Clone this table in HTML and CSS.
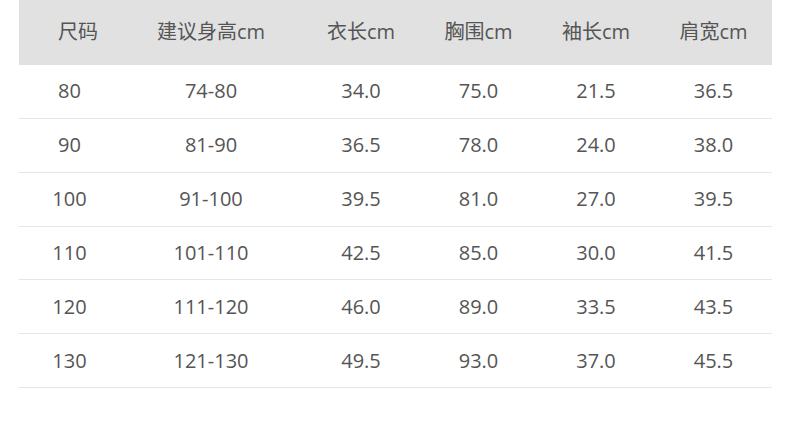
FILE: index.html
```html
<!DOCTYPE html>
<html lang="zh">
<head>
<meta charset="utf-8">
<link rel="stylesheet" href="styles.css">
</head>
<body>
<div class="size-table">
  <div class="row head">
    <div class="cell first">尺码</div><div class="cell">建议身高cm</div><div class="cell">衣长cm</div><div class="cell">胸围cm</div><div class="cell">袖长cm</div><div class="cell">肩宽cm</div>
  </div>
  <div class="row"><div class="cell">80</div><div class="cell">74-80</div><div class="cell">34.0</div><div class="cell">75.0</div><div class="cell">21.5</div><div class="cell">36.5</div></div>
  <div class="row"><div class="cell">90</div><div class="cell">81-90</div><div class="cell">36.5</div><div class="cell">78.0</div><div class="cell">24.0</div><div class="cell">38.0</div></div>
  <div class="row"><div class="cell">100</div><div class="cell">91-100</div><div class="cell">39.5</div><div class="cell">81.0</div><div class="cell">27.0</div><div class="cell">39.5</div></div>
  <div class="row"><div class="cell">110</div><div class="cell">101-110</div><div class="cell">42.5</div><div class="cell">85.0</div><div class="cell">30.0</div><div class="cell">41.5</div></div>
  <div class="row"><div class="cell">120</div><div class="cell">111-120</div><div class="cell">46.0</div><div class="cell">89.0</div><div class="cell">33.5</div><div class="cell">43.5</div></div>
  <div class="row"><div class="cell">130</div><div class="cell">121-130</div><div class="cell">49.5</div><div class="cell">93.0</div><div class="cell">37.0</div><div class="cell">45.5</div></div>
</div>
</body>
</html>
```
FILE: styles.css
```css
html, body {
  margin: 0;
  padding: 0;
  background: #ffffff;
}
body {
  font-family: "Open Sans", "Noto Sans CJK SC", sans-serif;
  font-size: 20px;
  color: #555555;
}
.size-table {
  margin-left: 19px;
  width: 753px;
}
.row {
  display: grid;
  grid-template-columns: 101px 182px 118px 117px 118px 117px;
  height: 52.85px;
  align-items: center;
  border-bottom: 1px solid #e6e6e6;
}
.row.head {
  height: 65px;
  background: #e1e1e1;
  border-bottom: none;
}
.cell {
  text-align: center;
  white-space: nowrap;
  line-height: 1;
}
.head .cell {
  padding-bottom: 1px;
}
.head .cell.first {
  padding-left: 17px;
}
```
